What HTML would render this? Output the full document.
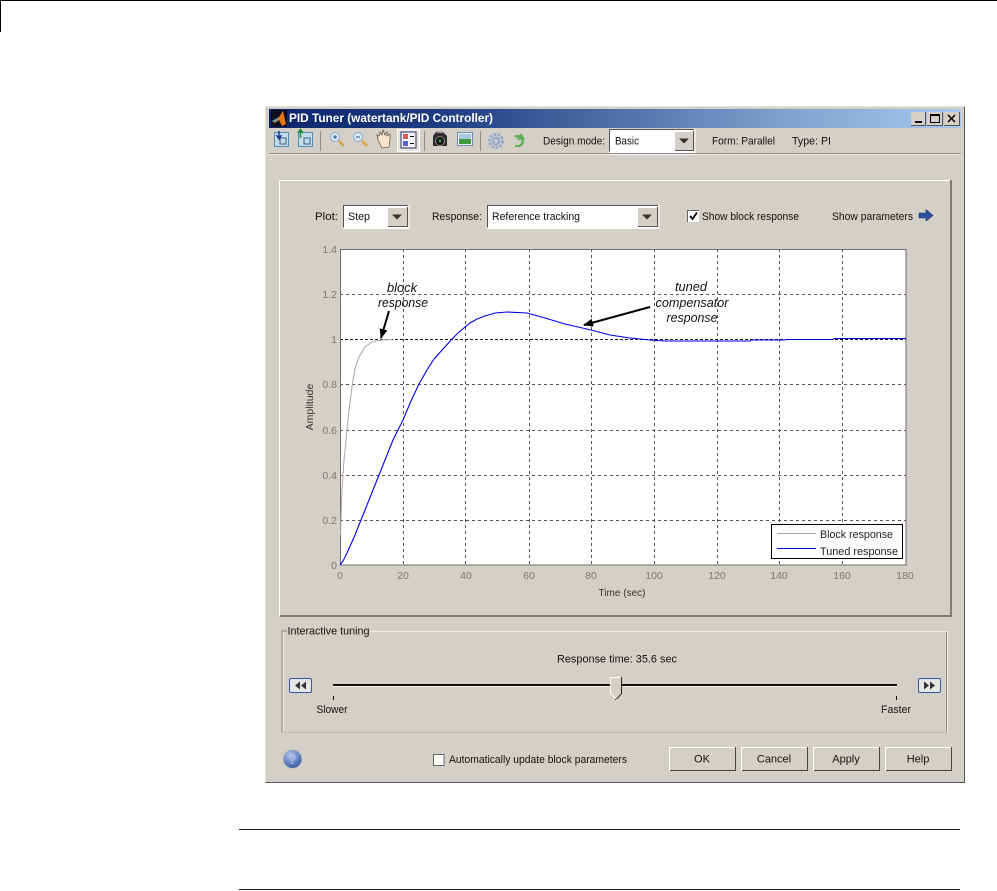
<!DOCTYPE html>
<html><head><meta charset="utf-8"><style>
html,body{margin:0;padding:0;background:#fff;width:997px;height:891px;overflow:hidden}
svg{display:block;position:absolute;left:0;top:0}
text{font-family:"Liberation Sans",sans-serif;font-size:11px;fill:#111}
.g{fill:#777;font-size:10.5px}
.i{font-style:italic;font-size:12.5px;fill:#111}
.l{stroke:#555;stroke-width:1;stroke-dasharray:3 3;fill:none}
</style></head><body>
<svg width="997" height="891" viewBox="0 0 997 891" xmlns="http://www.w3.org/2000/svg">
<defs>
<linearGradient id="tb" x1="0" x2="1" y1="0" y2="0"><stop offset="0" stop-color="#0a246a"/><stop offset=".25" stop-color="#1f3d80"/><stop offset=".5" stop-color="#4f6fa8"/><stop offset=".75" stop-color="#7fa2cf"/><stop offset="1" stop-color="#a6caf0"/></linearGradient>
<radialGradient id="hq" cx=".4" cy=".3" r=".8"><stop offset="0" stop-color="#b9c9ea"/><stop offset=".6" stop-color="#5c7cc0"/><stop offset="1" stop-color="#2f4c96"/></radialGradient>
<marker id="a" viewBox="0 0 10 8" refX="9" refY="4" markerWidth="10" markerHeight="8" markerUnits="userSpaceOnUse" orient="auto"><path d="M0 0L10 4L0 8z" fill="#000"/></marker>
</defs>
<!-- page rules -->
<rect x="0" y="0" width="997" height="1" fill="#000"/>
<rect x="0" y="0" width="1" height="32" fill="#000"/>
<rect x="239" y="829" width="721" height="1" fill="#222"/>
<rect x="239" y="889" width="721" height="1" fill="#222"/>
<!-- window -->
<rect x="265" y="106" width="700" height="677" fill="#d4d0c8"/>
<rect x="265.5" y="106.5" width="699" height="676" fill="none" stroke="#e6e3dd"/>
<path d="M964.5 107V782.5H265.5" fill="none" stroke="#555"/>
<rect x="269" y="109" width="692" height="19" fill="url(#tb)"/>
<rect x="271" y="110" width="16" height="17" fill="#0a0f20"/>
<path d="M272 121L279 117L283 111L286 124L282 126L279 120L275 123z" fill="#e8751a"/>
<path d="M272 121L279 117L276 122z" fill="#4fa3c8"/>
<text x="289" y="122" style="font-weight:bold;font-size:11.5px;fill:#fff" textLength="204" lengthAdjust="spacingAndGlyphs">PID Tuner (watertank/PID Controller)</text>
<!-- window buttons -->
<g shape-rendering="crispEdges">
<rect x="911" y="112" width="15" height="14" fill="#d4d0c8"/><path d="M911 125.5H926M925.5 112V126" stroke="#555" fill="none"/><rect x="915" y="121" width="7" height="2" fill="#000"/>
<rect x="927" y="112" width="16" height="14" fill="#d4d0c8"/><path d="M927 125.5H943M942.5 112V126" stroke="#555" fill="none"/><rect x="930.5" y="114.5" width="9" height="8" fill="none" stroke="#000"/><rect x="930" y="114" width="10" height="2" fill="#000"/>
<rect x="944" y="112" width="16" height="14" fill="#d4d0c8"/><path d="M944 125.5H960M959.5 112V126" stroke="#555" fill="none"/></g>
<path d="M948 115L955 122M955 115L948 122" stroke="#000" stroke-width="1.5"/>
<!-- toolbar icons -->
<rect x="274.5" y="132.5" width="14" height="14" fill="#c6dcec" stroke="#4d8db5"/><rect x="280" y="138" width="6" height="6" fill="none" stroke="#2f5f80"/><path d="M279 131V138M276.5 135L279 139L281.5 135" stroke="#123c9c" fill="none" stroke-width="1.5"/>
<rect x="298.5" y="132.5" width="14" height="14" fill="#c6dcec" stroke="#4d8db5"/><rect x="304" y="138" width="6" height="6" fill="none" stroke="#2f5f80"/><path d="M300.5 130V138M298 133L300.5 129.5L303 133" stroke="#1f8a2e" fill="none" stroke-width="1.5"/>
<rect x="320" y="131" width="1" height="20" fill="#8f8d88"/>
<circle cx="335" cy="137" r="4.5" fill="#d8e8f8" stroke="#8aa9cc"/><path d="M339 141L344 146" stroke="#dca040" stroke-width="2.6"/><path d="M333 137H337M335 135V139" stroke="#2d4f80"/>
<circle cx="358" cy="137" r="4.5" fill="#d8e8f8" stroke="#8aa9cc"/><path d="M362 141L367 146" stroke="#dca040" stroke-width="2.6"/><path d="M356 137H360" stroke="#2d4f80"/>
<path d="M378 140L377 135L379 136L380 132L382 135L383 130L385 135L387 132L387 136L390 134L390 140L389 147L382 148z" fill="#fde4cf" stroke="#6a5a4c" stroke-width=".8"/>
<rect x="397.5" y="129.5" width="22" height="22" fill="#e8e5df" stroke="#fff"/>
<rect x="401" y="132" width="15" height="16" fill="#f4f4f8" stroke="#223066"/>
<rect x="403" y="134" width="5" height="5" fill="#e05a5a"/><rect x="403" y="141" width="5" height="5" fill="#5a62d8"/><rect x="410" y="136" width="4" height="1" fill="#111"/><rect x="410" y="143" width="4" height="1" fill="#111"/>
<rect x="424" y="131" width="1" height="20" fill="#8f8d88"/>
<path d="M433 136L436 132H443L447 136V146H433z" fill="#2c2c2c"/><circle cx="440" cy="141" r="4.5" fill="#111" stroke="#8a8a8a"/><circle cx="440" cy="141" r="1.5" fill="#2f9e3c"/><rect x="437" y="131" width="6" height="2" fill="#a5a29b"/>
<rect x="457.5" y="132.5" width="15" height="13" fill="#e8eef6" stroke="#6f8fb0"/><rect x="459" y="134" width="12" height="5" fill="#a8c8e0"/><rect x="459" y="139" width="12" height="5" fill="#3f9a3c"/>
<rect x="480" y="131" width="1" height="20" fill="#8f8d88"/>
<circle cx="496" cy="141" r="6.5" fill="none" stroke="#8eaad0" stroke-width="3" stroke-dasharray="2.5 1.5"/><circle cx="496" cy="141" r="3.5" fill="#a9c0dd" stroke="#7a96bd"/><circle cx="496" cy="141" r="1.5" fill="#d4d0c8"/>
<path d="M515 137A5 5 0 1 1 519 146" fill="none" stroke="#5cb04e" stroke-width="2.4"/><path d="M521 133L525 139L517 140z" fill="#5cb04e"/><path d="M515 146h5" stroke="#5cb04e" stroke-width="2"/>
<text x="543" y="144.5" textLength="62" lengthAdjust="spacingAndGlyphs">Design mode:</text>
<!-- design combo -->
<g shape-rendering="crispEdges">
<rect x="609" y="129" width="85" height="23" fill="#fff"/>
<path d="M609.5 151.5V129.5H694" stroke="#555" fill="none"/><path d="M609 152.5H695V129" stroke="#fff" fill="none"/>
<rect x="674" y="131" width="19" height="20" fill="#d4d0c8"/><path d="M674.5 151V131.5H693" stroke="#fff" fill="none"/><path d="M675 150.5H693.5V131" stroke="#555" fill="none"/>
</g>
<path d="M679 138.5H689L684 143.5z" fill="#333"/>
<text x="615" y="144.5" textLength="24" lengthAdjust="spacingAndGlyphs">Basic</text>
<text x="712" y="144.5" textLength="63" lengthAdjust="spacingAndGlyphs">Form: Parallel</text>
<text x="792" y="144.5" textLength="39" lengthAdjust="spacingAndGlyphs">Type: PI</text>
<rect x="269" y="153" width="692" height="1" fill="#8e8c86"/><rect x="269" y="154" width="692" height="1" fill="#f2f0ec"/>
<!-- panel -->
<g shape-rendering="crispEdges" fill="none">
<path d="M279.5 616V180.5H950" stroke="#fff"/><path d="M280 615.5H950.5V180" stroke="#7e7c78"/><path d="M280 616.5H951.5V180" stroke="#7e7c78"/>
</g>
<text x="315" y="220" textLength="23" lengthAdjust="spacingAndGlyphs">Plot:</text>
<g shape-rendering="crispEdges">
<rect x="343" y="205" width="65" height="23" fill="#fff"/>
<path d="M343.5 227.5V205.5H408" stroke="#555" fill="none"/><path d="M343 228.5H409V205" stroke="#fff" fill="none"/>
<rect x="387" y="207" width="20" height="20" fill="#d4d0c8"/><path d="M387.5 227V207.5H407" stroke="#fff" fill="none"/><path d="M388 226.5H407.5V207" stroke="#555" fill="none"/>
</g>
<path d="M392 214.5H402L397 219.5z" fill="#333"/>
<text x="348" y="220" textLength="22" lengthAdjust="spacingAndGlyphs">Step</text>
<text x="432" y="220" textLength="50" lengthAdjust="spacingAndGlyphs">Response:</text>
<g shape-rendering="crispEdges">
<rect x="487" y="205" width="171" height="23" fill="#fff"/>
<path d="M487.5 227.5V205.5H658" stroke="#555" fill="none"/><path d="M487 228.5H659V205" stroke="#fff" fill="none"/>
<rect x="637" y="207" width="20" height="20" fill="#d4d0c8"/><path d="M637.5 227V207.5H657" stroke="#fff" fill="none"/><path d="M638 226.5H657.5V207" stroke="#555" fill="none"/>
</g>
<path d="M642 214.5H652L647 219.5z" fill="#333"/>
<text x="492" y="220" textLength="88" lengthAdjust="spacingAndGlyphs">Reference tracking</text>
<g shape-rendering="crispEdges"><rect x="688" y="211" width="11" height="11" fill="#fff"/><path d="M687.5 222V210.5H699" stroke="#666" fill="none"/></g>
<path d="M690 216L692.5 219L697 212.5" stroke="#000" stroke-width="1.8" fill="none"/>
<text x="702" y="220" textLength="97" lengthAdjust="spacingAndGlyphs">Show block response</text>
<text x="832" y="220" textLength="81" lengthAdjust="spacingAndGlyphs">Show parameters</text>
<path d="M919 213H926V209.5L933 215.5L926 221V218H919z" fill="#2a4f9c" stroke="#1c3570" stroke-width=".6"/>
<!-- plot -->
<rect x="340" y="249" width="566" height="316" fill="#fff"/>
<g class="l">
<path d="M340 294.5H906M340 384.5H906M340 430.5H906M340 475.5H906M340 520.5H906"/>
<path d="M403.5 249V565M465.5 249V565M529.5 249V565M591.5 249V565M654.5 249V565M717.5 249V565M779.5 249V565M842.5 249V565"/>
</g>
<path d="M340 339.5H906" stroke="#111" stroke-dasharray="3 2" fill="none"/>
<rect x="340.5" y="249.5" width="565.5" height="315.5" fill="none" stroke="#6e6e6e"/>
<polyline fill="none" stroke="#a8a8a8" points="340.5,535 341,520 342,490 344,460 346,440 349,410 352,387 355,368 359,357 365,347 372,342 382,340 392,339.5"/>
<polyline fill="none" stroke="#0000e8" stroke-width="1.1" points="340,565 343,561 347,553 355,535 365,510 375,485 385,460 393,440 403,420 411,401 419,384 427,370 434,359 443,349 452,339 458,333 465,327 470,323 477,319 485,316 495,313 507,312 527,313 545,318 565,324 591,330 610,335 630,338 650,340 665,341 700,341 750,341 751,340 785,340 786,339.5 833,339.5 834,338.5 906,338.5"/>
<path d="M389 311L381 338" stroke="#000" stroke-width="2" marker-end="url(#a)"/>
<path d="M650 307L584 325" stroke="#000" stroke-width="2" marker-end="url(#a)"/>
<text class="i" x="402" y="292" text-anchor="middle" textLength="30" lengthAdjust="spacingAndGlyphs">block</text>
<text class="i" x="403" y="307" text-anchor="middle" textLength="50" lengthAdjust="spacingAndGlyphs">response</text>
<text class="i" x="691" y="291" text-anchor="middle" textLength="32" lengthAdjust="spacingAndGlyphs">tuned</text>
<text class="i" x="692" y="307" text-anchor="middle" textLength="73" lengthAdjust="spacingAndGlyphs">compensator</text>
<text class="i" x="692" y="322" text-anchor="middle" textLength="51" lengthAdjust="spacingAndGlyphs">response</text>
<!-- y labels -->
<g text-anchor="end">
<text class="g" x="337" y="253">1.4</text><text class="g" x="337" y="298">1.2</text><text class="g" x="337" y="343">1</text><text class="g" x="337" y="388">0.8</text><text class="g" x="337" y="434">0.6</text><text class="g" x="337" y="479">0.4</text><text class="g" x="337" y="524">0.2</text><text class="g" x="337" y="569">0</text>
</g>
<g text-anchor="middle">
<text class="g" x="340" y="579">0</text><text class="g" x="403" y="579">20</text><text class="g" x="466" y="579">40</text><text class="g" x="529" y="579">60</text><text class="g" x="591" y="579">80</text><text class="g" x="654" y="579">100</text><text class="g" x="717" y="579">120</text><text class="g" x="779" y="579">140</text><text class="g" x="842" y="579">160</text><text class="g" x="905" y="579">180</text>
<text x="622" y="596" style="font-size:10.5px;fill:#333" textLength="47" lengthAdjust="spacingAndGlyphs">Time (sec)</text>
<text x="0" y="0" transform="translate(313,407) rotate(-90)" style="font-size:10.5px;fill:#333">Amplitude</text>
</g>
<!-- legend -->
<rect x="771.5" y="524.5" width="131" height="34" fill="#fff" stroke="#000"/>
<rect x="777" y="533" width="39" height="1" fill="#aaa"/><rect x="777" y="548" width="39" height="1" fill="#0000e8"/>
<text x="820" y="538" style="font-size:11px;fill:#222" textLength="73" lengthAdjust="spacingAndGlyphs">Block response</text>
<text x="820" y="555" style="font-size:11px;fill:#222" textLength="78" lengthAdjust="spacingAndGlyphs">Tuned response</text>
<!-- group -->
<path d="M287 631H282V732" fill="none" stroke="#8e8c86" shape-rendering="crispEdges"/>
<path d="M370 631.5H947.5V732.5" fill="none" stroke="#efede8" shape-rendering="crispEdges"/>
<path d="M282 732.5H947" fill="none" stroke="#bdbab3" shape-rendering="crispEdges"/>
<path d="M283.5 632V731" fill="none" stroke="#efede8" shape-rendering="crispEdges"/>
<path d="M946.5 632V732" fill="none" stroke="#8e8c86" shape-rendering="crispEdges"/>
<text x="287.5" y="634.5" textLength="82" lengthAdjust="spacingAndGlyphs">Interactive tuning</text>
<text x="557" y="662.5" textLength="120" lengthAdjust="spacingAndGlyphs">Response time: 35.6 sec</text>
<!-- slider -->
<rect x="333" y="684" width="564" height="2" fill="#111"/><rect x="333" y="686" width="564" height="1" fill="#f6f5f1"/>
<rect x="333" y="696" width="1" height="4" fill="#111"/><rect x="896" y="696" width="1" height="4" fill="#111"/>
<path d="M610.5 677.5H621.5V693L616 699L610.5 693z" fill="#d4d0c8" stroke="#fff"/>
<path d="M621.5 677V693.5L616.5 699" fill="none" stroke="#222"/><rect x="615" y="699" width="1" height="1" fill="#222"/>
<text x="332" y="713" text-anchor="middle" textLength="31" lengthAdjust="spacingAndGlyphs">Slower</text>
<text x="896" y="713" text-anchor="middle" textLength="30" lengthAdjust="spacingAndGlyphs">Faster</text>
<rect x="289.5" y="678.5" width="22" height="14" rx="1.5" fill="#e6e6e6" stroke="#33589e"/>
<path d="M300 681.5V689.5L295 685.5zM306 681.5V689.5L301 685.5z" fill="#333"/>
<rect x="918.5" y="678.5" width="22" height="14" rx="1.5" fill="#e6e6e6" stroke="#33589e"/>
<path d="M924 681.5V689.5L929 685.5zM930 681.5V689.5L935 685.5z" fill="#333"/>
<!-- footer -->
<circle cx="292.5" cy="759" r="9.5" fill="url(#hq)" stroke="#c9c7c2"/>
<text x="292.5" y="764" text-anchor="middle" style="font-weight:bold;font-size:13px;fill:#a9bde6">?</text>
<rect x="433.5" y="754.5" width="10.5" height="11" fill="#fff" stroke="#666" shape-rendering="crispEdges"/>
<text x="449" y="763" textLength="178" lengthAdjust="spacingAndGlyphs">Automatically update block parameters</text>
<g shape-rendering="crispEdges" fill="none">
<path d="M669.5 771V747.5H735" stroke="#fff"/><path d="M670 770.5H735.5V747" stroke="#444"/>
<path d="M741.5 771V747.5H807" stroke="#fff"/><path d="M742 770.5H807.5V747" stroke="#444"/>
<path d="M813.5 771V747.5H879" stroke="#fff"/><path d="M814 770.5H879.5V747" stroke="#444"/>
<path d="M885.5 771V747.5H951" stroke="#fff"/><path d="M886 770.5H951.5V747" stroke="#444"/>
</g>
<g text-anchor="middle">
<text x="702" y="762.5">OK</text><text x="774" y="762.5">Cancel</text><text x="846" y="762.5">Apply</text><text x="918" y="762.5">Help</text>
</g>
</svg>
</body></html>
